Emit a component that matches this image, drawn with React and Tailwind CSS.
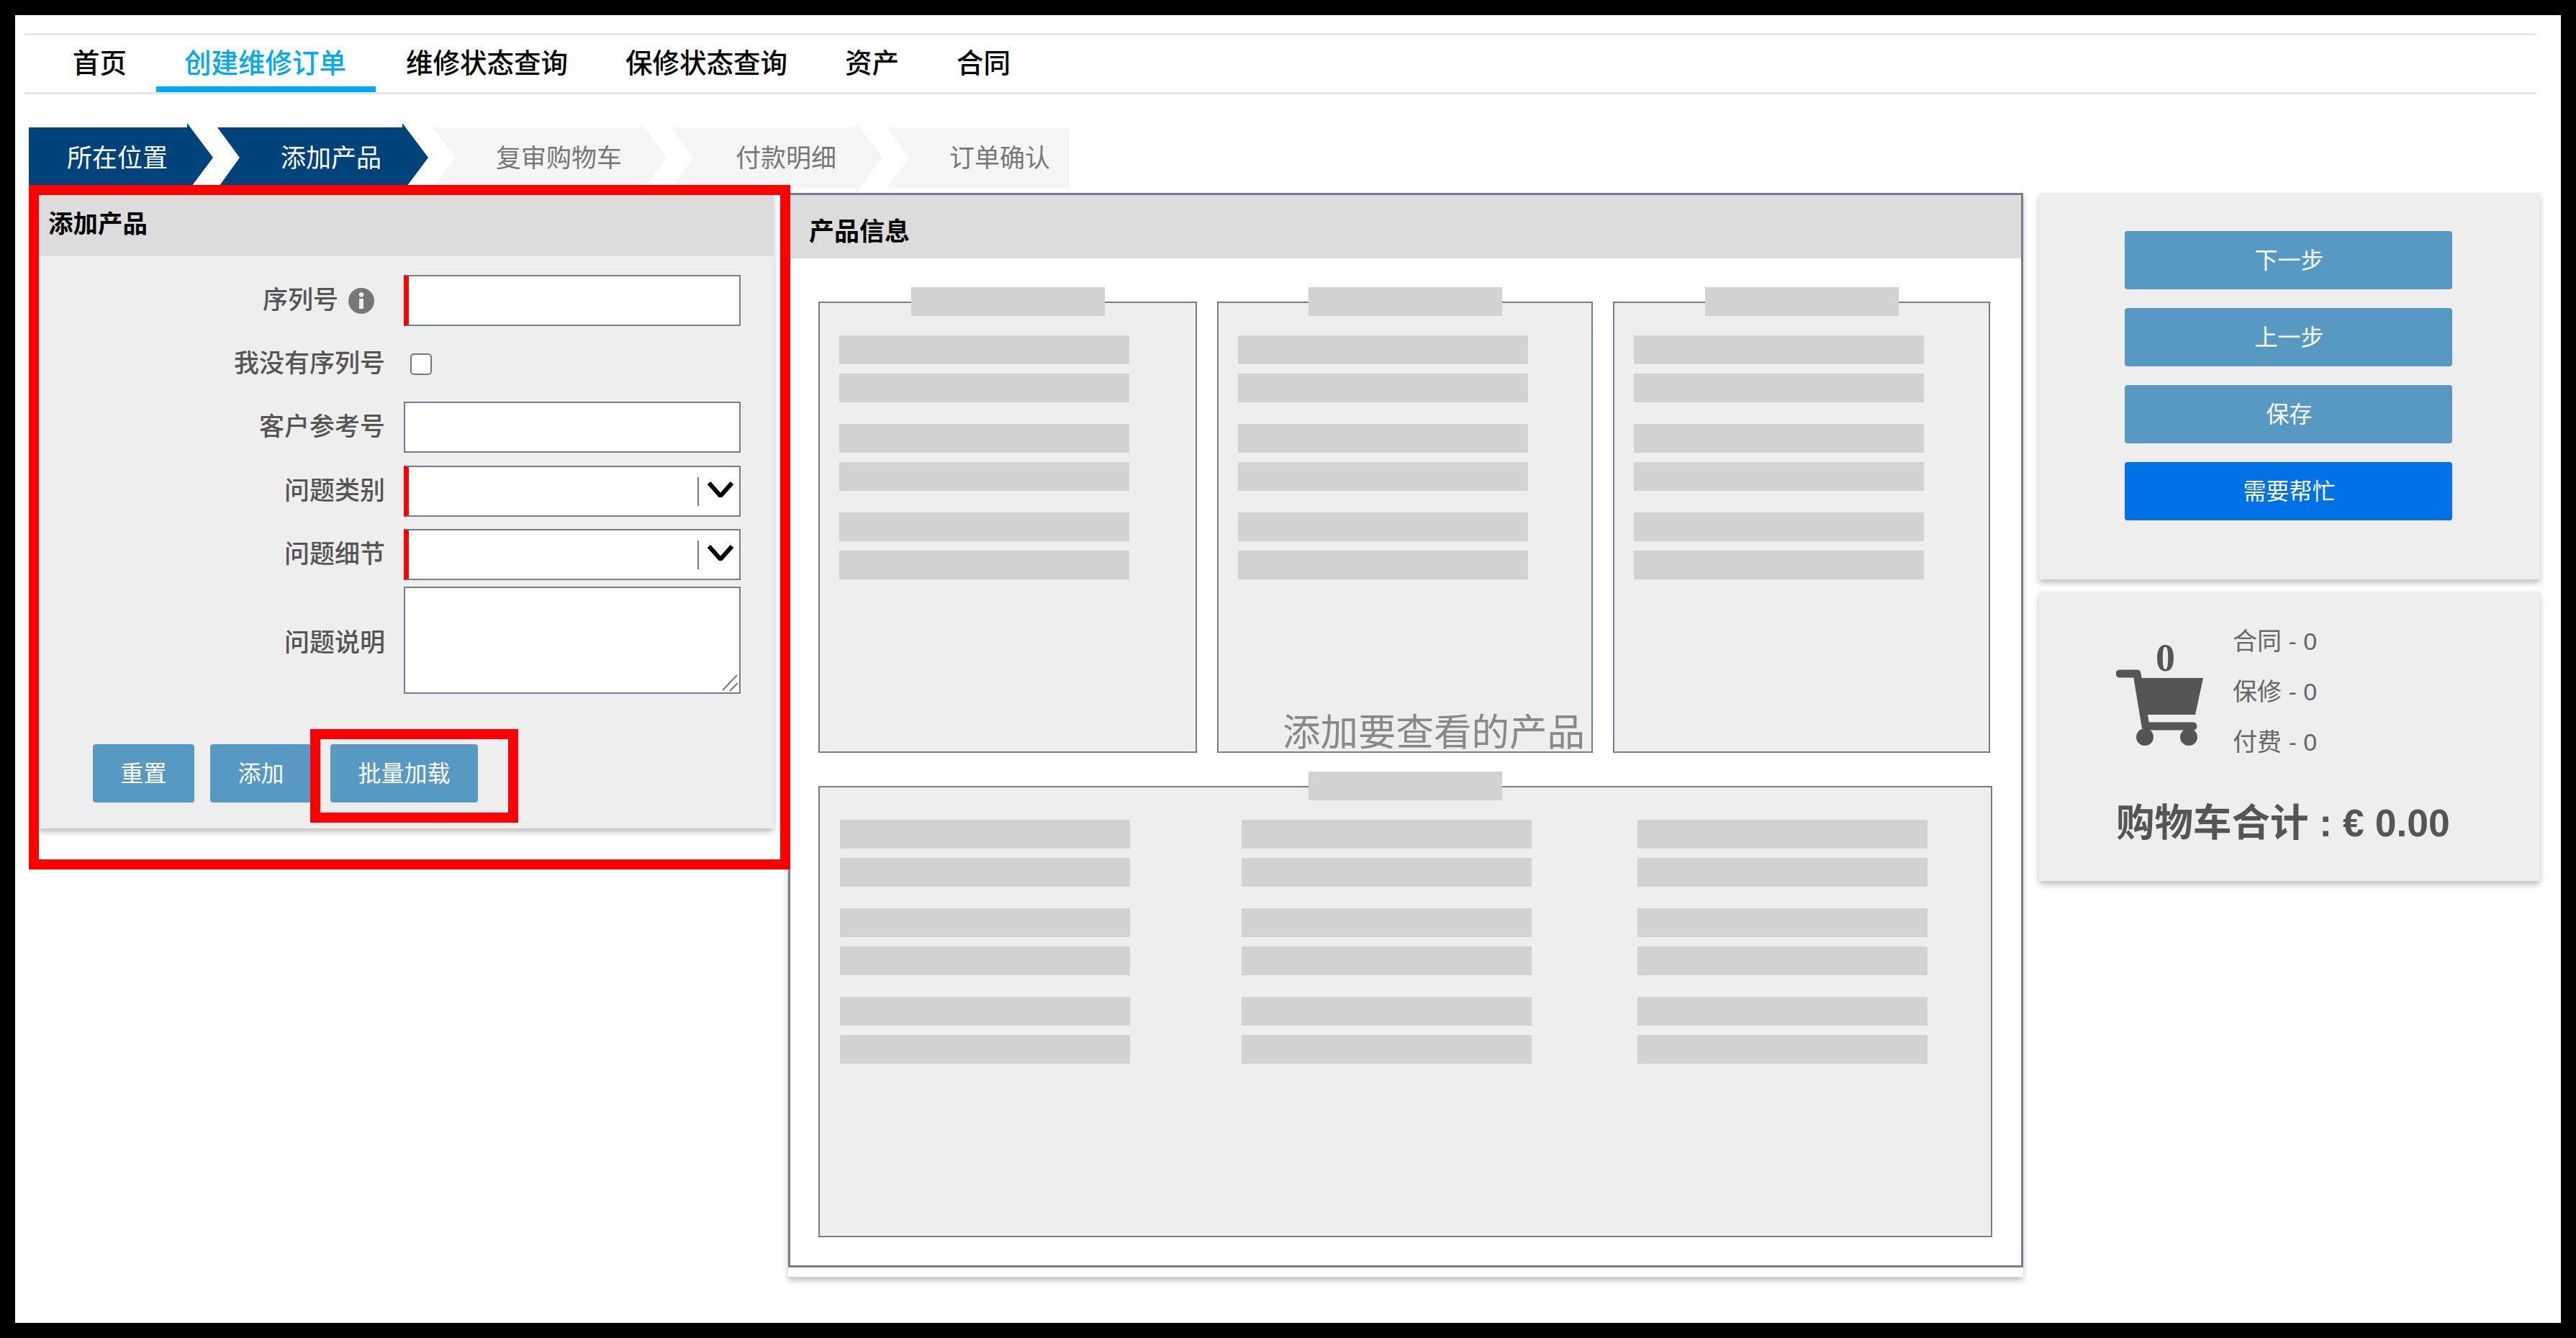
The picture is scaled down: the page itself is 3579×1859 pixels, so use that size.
const fontStack = "font-['Liberation_Sans','Noto_Sans_CJK_SC',sans-serif]";

const navItems = [
  { label: '首页' },
  { label: '创建维修订单', active: true },
  { label: '维修状态查询' },
  { label: '保修状态查询' },
  { label: '资产' },
  { label: '合同' },
];

const steps = [
  {
    label: '所在位置',
    className:
      'w-[256px] pl-[53px] bg-[#00427a] text-white [clip-path:polygon(0_6px,220px_6px,220px_0,256px_48px,220px_96px,220px_91px,0_91px)]',
  },
  {
    label: '添加产品',
    className:
      'w-[293px] pl-[88px] bg-[#00427a] text-white [clip-path:polygon(0_6px,257px_6px,257px_0,293px_48px,257px_96px,257px_91px,0_91px,31px_48px)]',
  },
  {
    label: '复审购物车',
    className:
      'w-[325px] pl-[88px] bg-[#f5f5f5] text-[#777777] [clip-path:polygon(0_6px,290px_6px,290px_0,325px_48px,290px_96px,290px_91px,0_91px,31px_48px)]',
  },
  {
    label: '付款明细',
    className:
      'w-[294px] pl-[90px] bg-[#f5f5f5] text-[#777777] [clip-path:polygon(0_6px,258px_6px,258px_0,294px_48px,258px_96px,258px_91px,0_91px,31px_48px)]',
  },
  {
    label: '订单确认',
    className:
      'w-[254px] pl-[87px] bg-[#f5f5f5] text-[#777777] [clip-path:polygon(0_6px,254px_6px,254px_91px,0_91px,31px_48px)]',
  },
];

function Bars() {
  return (
    <div className="flex flex-col w-[403px]">
      <div className="h-[40px] bg-[#d2d2d2]" />
      <div className="h-[40px] mt-[13px] bg-[#d2d2d2]" />
      <div className="h-[40px] mt-[30px] bg-[#d2d2d2]" />
      <div className="h-[40px] mt-[13px] bg-[#d2d2d2]" />
      <div className="h-[40px] mt-[30px] bg-[#d2d2d2]" />
      <div className="h-[40px] mt-[13px] bg-[#d2d2d2]" />
    </div>
  );
}

function Card({ className, children }) {
  return (
    <div className={`flex flex-col h-[627px] bg-[#eeeeee] border-2 border-[#777d88] ${className}`}>
      <div className="self-center -mt-[22px] w-[269px] h-[40px] bg-[#d2d2d2]" />
      {children}
    </div>
  );
}

function FormRow({ label, icon, className = '', labelClass = '', children }) {
  return (
    <div className={`flex items-center ${className}`}>
      <div className={`w-[482px] flex justify-end items-center text-[35px] font-medium text-[#555555] ${labelClass}`}>
        {label}
        {icon}
      </div>
      <div className="ml-[26px]">{children}</div>
    </div>
  );
}

function InfoIcon() {
  return (
    <svg viewBox="0 0 36 36" className="w-[36px] h-[36px] ml-[14px] mr-[15px]">
      <circle cx="18" cy="18" r="18" fill="#777777" />
      <circle cx="18" cy="9.5" r="3.2" fill="#eeeeee" />
      <rect x="15" y="15" width="6" height="14" fill="#eeeeee" />
    </svg>
  );
}

function SelectBox() {
  return (
    <div className="flex items-center justify-end w-[468px] h-[71px] bg-white border-2 border-[#777d88] border-l-[7px] border-l-[#ff0000]">
      <div className="w-[2px] h-[40px] bg-[#777777]" />
      <svg viewBox="0 0 36 22" className="w-[36px] h-[22px] ml-[12px] mr-[8px] mb-[6px]" fill="none" stroke="#000000" strokeWidth="6">
        <path d="M2 2 L18 20 L34 2" />
      </svg>
    </div>
  );
}

function CartIcon() {
  return (
    <svg viewBox="0 0 121 108" className="w-[121px] h-[108px]">
      <path d="M5 8 H29 L41 81 H107" fill="none" stroke="#555555" strokeWidth="11" strokeLinecap="round" strokeLinejoin="round" />
      <path d="M32 14 H121 L110 65 H40 Z" fill="#555555" />
      <circle cx="40" cy="96" r="12" fill="#555555" />
      <circle cx="101" cy="96" r="12" fill="#555555" />
    </svg>
  );
}

function SideButton({ label, className = 'bg-[#5899c4]' }) {
  return (
    <button type="button" className={`w-[455px] h-[81px] pl-[2px] rounded-[4px] text-[32px] text-white ${className}`}>
      {label}
    </button>
  );
}

export default function App() {
  return (
    <div className={`relative w-[3579px] h-[1859px] overflow-hidden bg-white border-[21px] border-black ${fontStack}`}>
      {/* tabs */}
      <nav className="flex w-[3490px] ml-[13px] mt-[25px] pl-[28px] border-y-[3px] border-[#e4e4e4]">
        {navItems.map((item) => (
          <div
            key={item.label}
            className={`flex items-center h-[79px] pl-[39px] pr-[41px] pt-[8px] border-b-[8px] text-[37.5px] font-medium ${
              item.active ? 'mr-[3px] border-[#00a9f4] text-[#00a9f4]' : 'border-transparent text-black'
            }`}
          >
            {item.label}
          </div>
        ))}
      </nav>

      {/* breadcrumb */}
      <div className="flex gap-[6px] ml-[19px] mt-[40px]">
        {steps.map((step) => (
          <div key={step.label} className={`flex items-center h-[96px] pt-[3px] text-[35px] ${step.className}`}>
            {step.label}
          </div>
        ))}
      </div>

      <div className="flex items-start ml-[32px] mt-[1px]">
        {/* add product form */}
        <div className="w-[1022px] h-[883px] bg-[#eeeeee] shadow-[0_5px_8px_rgba(0,0,0,0.25)]">
          <div className="flex items-center h-[88px] pl-[14px] bg-[#dcdcdc] text-[34.5px] font-bold text-black">添加产品</div>

          <FormRow label="序列号" icon={<InfoIcon />} className="mt-[26px]">
            <input className="block w-[468px] h-[71px] bg-white border-2 border-[#777d88] border-l-[7px] border-l-[#ff0000]" />
          </FormRow>
          <FormRow label="我没有序列号" className="h-[105px]">
            <div className="w-[30px] h-[30px] ml-[9px] rounded-[5px] bg-white border-2 border-[#777777]" />
          </FormRow>
          <FormRow label="客户参考号">
            <input className="block w-[468px] h-[71px] bg-white border-2 border-[#777d88]" />
          </FormRow>
          <FormRow label="问题类别" className="mt-[18px]">
            <SelectBox />
          </FormRow>
          <FormRow label="问题细节" className="mt-[17px]">
            <SelectBox />
          </FormRow>
          <FormRow label="问题说明" className="mt-[9px]" labelClass="pt-[8px]">
            <div className="relative">
              <textarea className="block w-[468px] h-[149px] bg-white border-2 border-[#777d88] resize-none" />
              <svg viewBox="0 0 24 24" className="absolute right-[3px] bottom-[3px] w-[24px] h-[24px]" stroke="#777777" strokeWidth="2">
                <path d="M22 1 L2 22 M23 12 L12 23" />
              </svg>
            </div>
          </FormRow>

          <div className="flex mt-[70px] pl-[76px] text-[32px] text-white">
            <button type="button" className="w-[141px] h-[81px] rounded-[4px] bg-[#5899c4]">重置</button>
            <button type="button" className="w-[141px] h-[81px] ml-[22px] rounded-[4px] bg-[#5899c4]">添加</button>
            <button type="button" className="w-[205px] h-[81px] ml-[26px] rounded-[4px] bg-[#5899c4]">批量加载</button>
          </div>
        </div>

        {/* product info */}
        <div className="relative ml-[20px] w-[1716px] h-[1506px] bg-white shadow-[0_5px_8px_rgba(0,0,0,0.25)]">
          <div className="h-[1493px] border-[3px] border-[#777d88]">
            <div className="flex items-center h-[88px] pl-[26px] pt-[14px] bg-[#dcdcdc] text-[35px] font-bold text-black">产品信息</div>
            <div className="flex gap-[28px] pl-[39px] pt-[60px]">
              <Card className="w-[526px]">
                <div className="mt-[27px] ml-[27px]"><Bars /></div>
              </Card>
              <Card className="w-[522px]">
                <div className="mt-[27px] ml-[27px]"><Bars /></div>
              </Card>
              <Card className="w-[524px]">
                <div className="mt-[27px] ml-[27px]"><Bars /></div>
              </Card>
            </div>
            <div className="ml-[39px] mt-[46px]">
              <Card className="w-[1631px]">
                <div className="flex mt-[27px] ml-[28px]">
                  <Bars />
                  <div className="ml-[155px]"><Bars /></div>
                  <div className="ml-[147px]"><Bars /></div>
                </div>
              </Card>
            </div>
          </div>
          <div className="absolute left-[687px] top-[720px] text-[52.5px] leading-[60px] text-[#888888]">添加要查看的产品</div>
        </div>

        {/* actions and cart */}
        <div className="flex flex-col gap-[17px] ml-[22px] w-[696px]">
          <div className="flex flex-col items-start gap-[26px] h-[537px] pt-[53px] pl-[119px] bg-[#eeeeee] shadow-[0_5px_8px_rgba(0,0,0,0.25)]">
            <SideButton label="下一步" />
            <SideButton label="上一步" />
            <SideButton label="保存" />
            <SideButton label="需要帮忙" className="bg-[#0071e6]" />
          </div>
          <div className="h-[402px] bg-[#eeeeee] shadow-[0_5px_8px_rgba(0,0,0,0.25)]">
            <div className="flex pl-[107px] pt-[34px]">
              <div className="flex flex-col w-[121px] pt-[38px]">
                <div className="ml-[55px] h-[40px] font-['Liberation_Serif',serif] text-[54px] leading-[40px] font-bold text-[#555555]">0</div>
                <div className="-mt-[6px]"><CartIcon /></div>
              </div>
              <div className="ml-[41px] text-[34px] leading-[70px] text-[#666666]">
                <div>合同 - 0</div>
                <div>保修 - 0</div>
                <div>付费 - 0</div>
              </div>
            </div>
            <div className="mt-[43px] pl-[107px] text-[53.5px] leading-[70px] font-bold text-[#555555]">购物车合计 : € 0.00</div>
          </div>
        </div>
      </div>

      {/* annotation frames */}
      <div className="absolute left-[19px] top-[236px] w-[1058px] h-[951px] border-[14px] border-[#ff0000]" />
      <div className="absolute left-[410px] top-[992px] w-[289px] h-[130px] border-[14px] border-[#ff0000]" />
    </div>
  );
}
